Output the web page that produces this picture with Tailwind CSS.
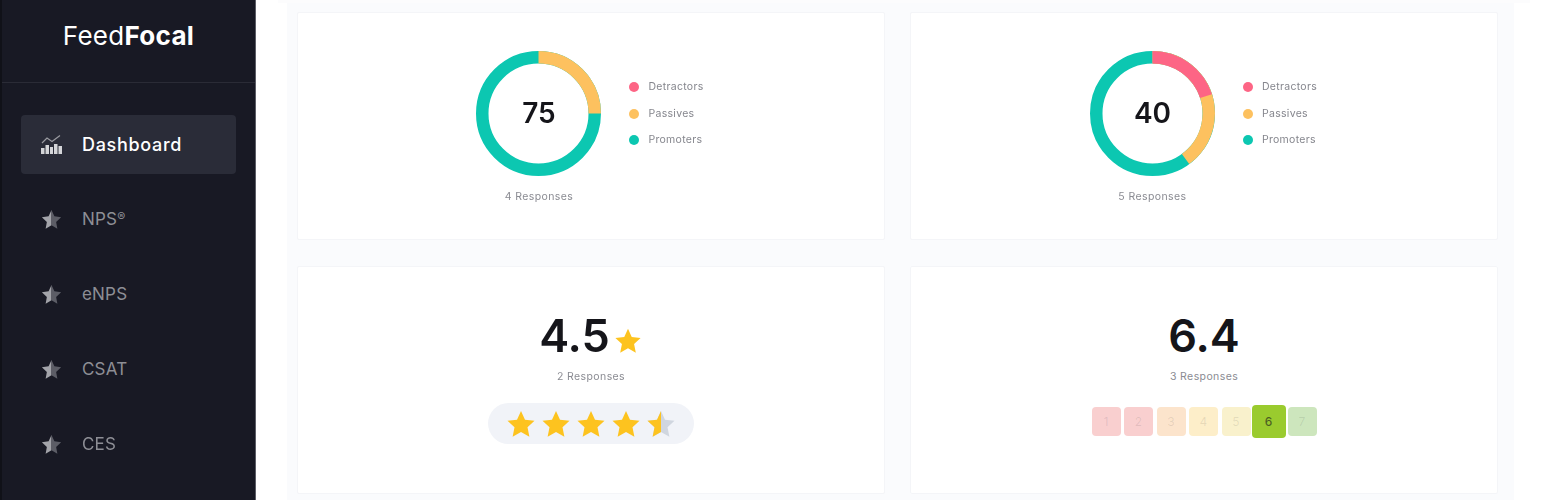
<!DOCTYPE html>
<html lang="en">
<head>
    <meta charset="UTF-8">
    <title>FeedFocal Dashboard</title>
    <script src="https://cdn.jsdelivr.net/npm/@tailwindcss/browser@4"></script>
</head>
<body class="bg-white font-['Inter',sans-serif]">
    <svg class="hidden">
        <symbol id="half-star" viewBox="0 0 24 24">
            <path fill="#a3a4aa" d="M12 1v17.600L5.300 22.500l1.400-7.700L1 9.400l7.700-1.100z"/>
            <path fill="#5c5d66" d="M12 1l3.300 7.300 7.700 1.100-5.700 5.400 1.400 7.700L12 18.600z"/>
        </symbol>
        <symbol id="star" viewBox="0 0 24 24">
            <path fill="#fdc31f" d="M12 1.500l3.200 7 7.600.9-5.600 5.200 1.500 7.500L12 18.300l-6.700 3.800 1.500-7.500L1.200 9.400l7.600-.9z"/>
        </symbol>
    </svg>
    <div class="flex h-[500px] w-[1544px] overflow-hidden blur-[0.7px]">
        <aside class="w-[256px] shrink-0 bg-[#181924] border-l-2 border-l-[#101118] border-r border-r-[#5c5d66]">
            <div class="h-[83px] border-b border-[#2a2b36] flex justify-center pt-[20px]">
                <span class="text-[26px] leading-[32px] text-white tracking-[0.3px]">Feed<b class="font-bold">Focal</b></span>
            </div>
            <nav class="px-[19px] pt-[32px] flex flex-col gap-[17px]">
                <a class="h-[59px] rounded bg-[#2a2c38] flex items-center gap-[20px] pl-[20px] text-white text-[18px] font-medium tracking-[0.7px]">
                    <svg class="w-[21px] h-[21px]" viewBox="0 0 21 21" fill="#d4d5d8">
                        <rect x="0" y="14" width="3.500" height="6"/>
                        <rect x="4.500" y="11" width="3.500" height="9"/>
                        <rect x="9" y="13" width="3" height="7"/>
                        <rect x="13" y="10" width="3.500" height="10"/>
                        <rect x="17.500" y="12" width="3.500" height="8"/>
                        <path fill="none" stroke="#9a9ba1" stroke-width="1.200" d="M1 9l5-5 5 3.500 8-6"/>
                    </svg>
                    Dashboard
                </a>
                <a class="h-[58px] flex items-center gap-[20px] pl-[20px] text-[#8d8e95] text-[17px] tracking-[0.2px]">
                    <svg class="w-[21px] h-[21px] -mt-[1px]"><use href="#half-star"/></svg>
                    <span>NPS<span class="text-[12px] align-[4px]">®</span></span>
                </a>
                <a class="h-[58px] flex items-center gap-[20px] pl-[20px] text-[#8d8e95] text-[17px] tracking-[0.2px]">
                    <svg class="w-[21px] h-[21px] -mt-[1px]"><use href="#half-star"/></svg>eNPS
                </a>
                <a class="h-[58px] flex items-center gap-[20px] pl-[20px] text-[#8d8e95] text-[17px] tracking-[0.2px]">
                    <svg class="w-[21px] h-[21px] -mt-[1px]"><use href="#half-star"/></svg>CSAT
                </a>
                <a class="h-[58px] flex items-center gap-[20px] pl-[20px] text-[#8d8e95] text-[17px] tracking-[0.2px]">
                    <svg class="w-[21px] h-[21px] -mt-[1px]"><use href="#half-star"/></svg>CES
                </a>
            </nav>
        </aside>

        <main class="flex-1">
            <div class="h-[3px] ml-[22px] mr-[14px] bg-[#fcfcfd]"></div>
            <div class="ml-[31px] w-[1227px] h-[497px] bg-[#fafbfd] pl-[10px] pt-[9px]">
                <div class="grid grid-cols-[588px_588px] grid-rows-[228px_228px] gap-x-[25px] gap-y-[26px]">

                    <div class="bg-white border border-[#f4f5f8] rounded-[2px] flex justify-center pt-[38px]">
                        <div class="flex gap-[28px] h-fit mr-[2px]">
                            <div class="w-[125px] flex flex-col items-center">
                                <div class="relative w-[125px] h-[125px]">
                                    <svg class="w-[125px] h-[125px] -rotate-90" viewBox="0 0 125 125" fill="none" stroke-width="12.500">
                                        <circle cx="62.500" cy="62.500" r="56.250" pathLength="100" stroke="#0cc7b1"/>
                                        <circle cx="62.500" cy="62.500" r="56.250" pathLength="100" stroke="#fdc15f" stroke-dasharray="25 75"/>
                                    </svg>
                                    <span class="absolute inset-0 flex items-center justify-center pb-[2px] text-[28px] font-semibold text-[#15151a]">75</span>
                                </div>
                                <span class="mt-[14px] text-[10.500px] leading-[14px] tracking-[0.4px] text-[#8a8b92] whitespace-nowrap">4 Responses</span>
                            </div>
                            <ul class="pt-[29px] flex flex-col gap-[12px] text-[10.500px] leading-[14.500px] tracking-[0.3px] text-[#85868d]">
                                <li class="flex items-center gap-[9px]"><i class="w-[10px] h-[10px] rounded-full bg-[#fd6585]"></i>Detractors</li>
                                <li class="flex items-center gap-[9px]"><i class="w-[10px] h-[10px] rounded-full bg-[#fdc15f]"></i>Passives</li>
                                <li class="flex items-center gap-[9px]"><i class="w-[10px] h-[10px] rounded-full bg-[#0cc7b1]"></i>Promoters</li>
                            </ul>
                        </div>
                    </div>

                    <div class="bg-white border border-[#f4f5f8] rounded-[2px] flex justify-center pt-[38px]">
                        <div class="flex gap-[28px] h-fit mr-[1px]">
                            <div class="w-[125px] flex flex-col items-center">
                                <div class="relative w-[125px] h-[125px]">
                                    <svg class="w-[125px] h-[125px] -rotate-90" viewBox="0 0 125 125" fill="none" stroke-width="12.500">
                                        <circle cx="62.500" cy="62.500" r="56.250" pathLength="100" stroke="#0cc7b1"/>
                                        <circle cx="62.500" cy="62.500" r="56.250" pathLength="100" stroke="#fdc15f" stroke-dasharray="40 60"/>
                                        <circle cx="62.500" cy="62.500" r="56.250" pathLength="100" stroke="#fd6585" stroke-dasharray="20 80"/>
                                    </svg>
                                    <span class="absolute inset-0 flex items-center justify-center pb-[2px] text-[28px] font-semibold text-[#15151a]">40</span>
                                </div>
                                <span class="mt-[14px] text-[10.500px] leading-[14px] tracking-[0.4px] text-[#8a8b92] whitespace-nowrap">5 Responses</span>
                            </div>
                            <ul class="pt-[29px] flex flex-col gap-[12px] text-[10.500px] leading-[14.500px] tracking-[0.3px] text-[#85868d]">
                                <li class="flex items-center gap-[9px]"><i class="w-[10px] h-[10px] rounded-full bg-[#fd6585]"></i>Detractors</li>
                                <li class="flex items-center gap-[9px]"><i class="w-[10px] h-[10px] rounded-full bg-[#fdc15f]"></i>Passives</li>
                                <li class="flex items-center gap-[9px]"><i class="w-[10px] h-[10px] rounded-full bg-[#0cc7b1]"></i>Promoters</li>
                            </ul>
                        </div>
                    </div>

                    <div class="bg-white border border-[#f4f5f8] rounded-[2px] flex flex-col items-center pt-[42px]">
                        <div class="flex items-end gap-[4px] h-[54px] mr-[1px]">
                            <span class="text-[45px] leading-[54px] font-semibold text-[#15151a]">4.5</span>
                            <svg class="w-[28px] h-[28px] mb-[8px]"><use href="#star"/></svg>
                        </div>
                        <span class="mt-[7px] text-[10.500px] leading-[14px] tracking-[0.4px] text-[#8a8b92]">2 Responses</span>
                        <div class="mt-[19px] mr-[1px] w-[206px] h-[41px] rounded-full bg-[#f1f3f8] flex items-center justify-center gap-[5px]">
                            <svg class="w-[30px] h-[30px]"><use href="#star"/></svg>
                            <svg class="w-[30px] h-[30px]"><use href="#star"/></svg>
                            <svg class="w-[30px] h-[30px]"><use href="#star"/></svg>
                            <svg class="w-[30px] h-[30px]"><use href="#star"/></svg>
                            <svg class="w-[30px] h-[30px]" viewBox="0 0 24 24">
                                <path fill="#d0d6df" d="M12 1.500l3.200 7 7.600.9-5.600 5.200 1.500 7.500L12 18.300l-6.700 3.800 1.500-7.500L1.200 9.400l7.600-.9z"/>
                                <path fill="#fdc31f" d="M12 1.500v16.800l-6.700 3.800 1.500-7.500L1.200 9.400l7.600-.9z"/>
                            </svg>
                        </div>
                    </div>

                    <div class="bg-white border border-[#f4f5f8] rounded-[2px] flex flex-col items-center pt-[42px]">
                        <span class="h-[54px] text-[45px] leading-[54px] font-semibold text-[#15151a]">6.4</span>
                        <span class="mt-[7px] text-[10.500px] leading-[14px] tracking-[0.4px] text-[#8a8b92]">3 Responses</span>
                        <div class="mt-[21px] flex items-center gap-[3.500px] text-[12px] text-[#15151a]/10">
                            <span class="w-[29px] h-[29px] rounded-[4px] bg-[#f9cfcf] flex items-center justify-center">1</span>
                            <span class="w-[29px] h-[29px] rounded-[4px] bg-[#f9cfcf] flex items-center justify-center">2</span>
                            <span class="w-[29px] h-[29px] rounded-[4px] bg-[#fce4cc] flex items-center justify-center">3</span>
                            <span class="w-[29px] h-[29px] rounded-[4px] bg-[#fdeec9] flex items-center justify-center">4</span>
                            <span class="w-[29px] h-[29px] rounded-[4px] bg-[#f9f1cc] flex items-center justify-center">5</span>
                            <span class="w-[34px] h-[33px] ml-[-2.500px] mr-[-1.500px] rounded-[4px] bg-[#9acb2e] flex items-center justify-center text-[#15151a]/60 font-medium">6</span>
                            <span class="w-[29px] h-[29px] rounded-[4px] bg-[#cde6bd] flex items-center justify-center">7</span>
                        </div>
                    </div>

                </div>
            </div>
        </main>
    </div>
</body>
</html>
